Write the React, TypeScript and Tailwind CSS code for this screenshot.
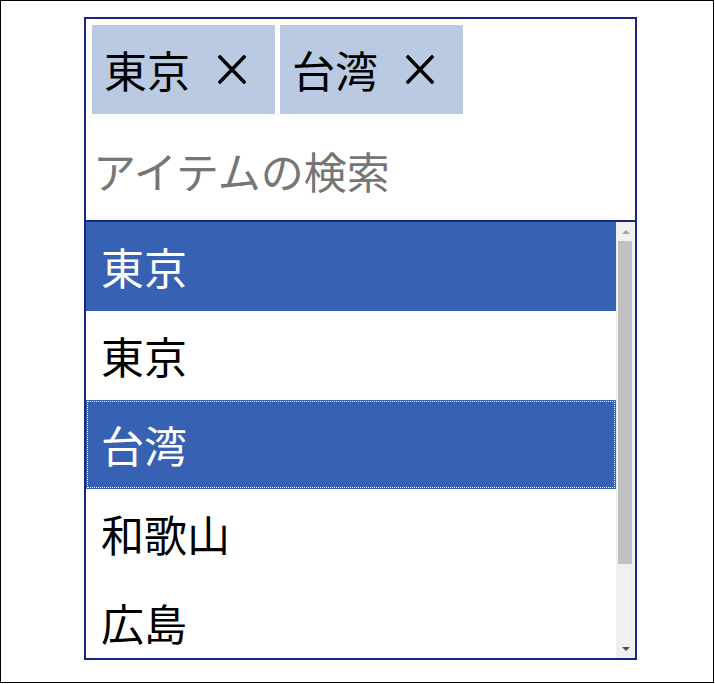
const font = { fontFamily: '"Noto Sans CJK JP", "Noto Sans", sans-serif' };

const tags = ["東京", "台湾"];

const items = [
  { label: "東京", selected: true, focused: false },
  { label: "東京", selected: false, focused: false },
  { label: "台湾", selected: true, focused: true },
  { label: "和歌山", selected: false, focused: false },
  { label: "広島", selected: false, focused: false },
];

const CloseIcon = () => (
  <svg width="28" height="29" viewBox="0 0 28 29" className="shrink-0">
    <path d="M2 2 L26 27 M26 2 L2 27" stroke="#000" strokeWidth="3.5" strokeLinecap="square" />
  </svg>
);

export default function App() {
  return (
    <div className="w-[714px] h-[683px] border border-black bg-white pl-[83px] pt-[16px]">
      {/* multiselect widget */}
      <div className="w-[553px] h-[643px] border-2 border-[#1b2585] flex flex-col overflow-hidden bg-white">
        {/* chips */}
        <div className="flex gap-[5px] pl-[6px] pt-[6px]">
          {tags.map((t) => (
            <div
              key={t}
              className="w-[183px] h-[89px] bg-[#b9cae2] flex items-center justify-between pl-[12px] pr-[29px]"
            >
              <span className="text-[43px] leading-none text-black" style={font}>
                {t}
              </span>
              <CloseIcon />
            </div>
          ))}
        </div>

        {/* search input */}
        <div className="h-[106px] flex items-center pl-[7px] pt-[6px]">
          <span className="text-[43px] leading-none text-[#767676]" style={font}>
            アイテムの検索
          </span>
        </div>

        {/* list */}
        <div className="flex flex-1 border-t-2 border-[#1b2585] min-h-0">
          <div className="flex-1 flex flex-col overflow-hidden">
            {items.map((it, i) => (
              <div
                key={i}
                className={`h-[89px] shrink-0 flex items-center pl-[15px] text-[43px] leading-none ${
                  it.selected ? "bg-[#3761b3] text-white" : "bg-white text-black"
                } ${it.focused ? "outline-1 outline-dotted outline-white -outline-offset-2" : ""}`}
                style={font}
              >
                {it.label}
              </div>
            ))}
          </div>

          {/* scrollbar */}
          <div className="w-[19px] bg-[#f0f0f0] flex flex-col items-center">
            <div className="h-[19px] flex items-center justify-center">
              <div className="w-0 h-0 border-l-[4px] border-r-[4px] border-b-[4px] border-l-transparent border-r-transparent border-b-[#a3a3a3]" />
            </div>
            <div className="w-[14px] h-[323px] bg-[#c1c1c1] ml-[-2px]" />
            <div className="flex-1" />
            <div className="h-[19px] flex items-center justify-center">
              <div className="w-0 h-0 border-l-[4px] border-r-[4px] border-t-[4px] border-l-transparent border-r-transparent border-t-[#505050]" />
            </div>
          </div>
        </div>
      </div>
    </div>
  );
}
